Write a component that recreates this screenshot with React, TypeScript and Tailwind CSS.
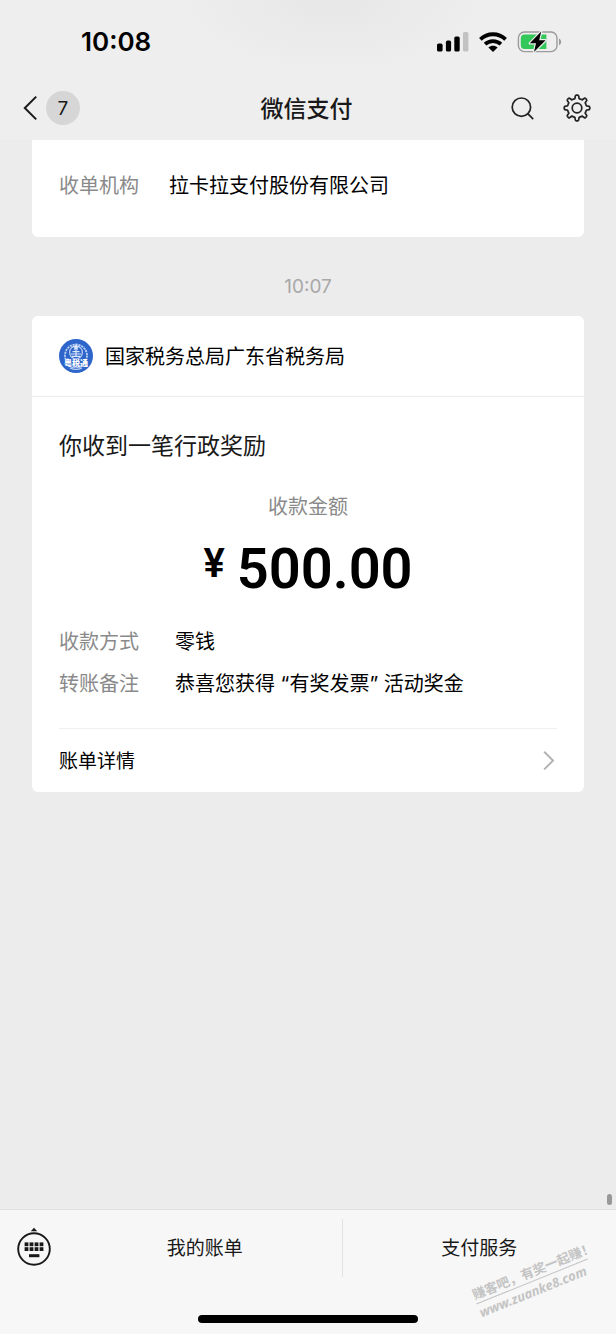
import type { ReactNode } from 'react';

interface Detail {
    label: string;
    value: string;
}

const DETAILS: Detail[] = [
    { label: '收款方式', value: '零钱' },
    { label: '转账备注', value: '恭喜您获得 “有奖发票” 活动奖金' },
];

const MENU = ['我的账单', '支付服务'];

// Outline of the settings gear: eight rounded teeth around (14, 14)
function gearPath() {
    const point = (radius: number, degrees: number) => {
        const rad = (degrees * Math.PI) / 180;
        return `${(14 + radius * Math.cos(rad)).toFixed(2)} ${(14 + radius * Math.sin(rad)).toFixed(2)}`;
    };
    let d = `M${point(9.8, -12)}`;
    for (let i = 0; i < 8; i++) {
        const a = i * 45;
        d += `L${point(11.4, a - 9)}Q${point(12.8, a - 8)} ${point(12.8, a - 3)}`;
        d += `L${point(12.8, a + 3)}Q${point(12.8, a + 8)} ${point(11.4, a + 9)}`;
        d += `L${point(9.8, a + 12)}Q${point(9.2, a + 17)} ${point(9.7, a + 22.5)}`;
        d += `Q${point(9.2, a + 28)} ${point(9.8, a + 33)}`;
    }
    return d + 'Z';
}

function StatusBar() {
    return (
        <div className="flex h-[76px] items-center justify-between pt-2 pr-[54px] pl-[81px]">
            <span className="text-[26px] leading-8 font-semibold text-black">10:08</span>
            <div className="flex items-center gap-[10px]">
                <svg width="32" height="22" viewBox="0 0 32 22" aria-hidden="true">
                    <rect x="0" y="12.6" width="5.6" height="8" rx="1.6" />
                    <rect x="8.9" y="9.6" width="5.2" height="11" rx="1.6" />
                    <rect x="17.3" y="5.6" width="5.4" height="15" rx="1.6" />
                    <rect x="26" y="1" width="5.4" height="19.6" rx="1.6" fill="#c2c2c2" />
                </svg>
                <svg width="28" height="22" viewBox="0 0 28 22" fill="none" stroke="#000" strokeWidth="3.8" aria-hidden="true">
                    <path d="M1.4 8.4C8.4 1.5 19.6 1.5 26.6 8.4" />
                    <path d="M6.1 13.2C10.5 9 17.5 9 21.9 13.2" />
                    <path d="M14 21L9.4 16.5C12 14.2 16 14.2 18.6 16.5Z" fill="#000" stroke="none" />
                </svg>
                <svg width="45" height="22" viewBox="0 0 45 22" aria-hidden="true">
                    <rect x="1.4" y="1" width="38.6" height="19.6" rx="6" fill="none" stroke="#9b9b9b" strokeWidth="1.4" />
                    <path d="M42 7.4C44.8 8.6 44.8 13 42 14.2Z" fill="#9b9b9b" />
                    <path d="M7.6 3.6H29.4V18H7.6Q3.8 18 3.8 14V7.6Q3.8 3.6 7.6 3.6Z" fill="#34c759" />
                    <path
                        d="M24.2 0.6L12.8 12.3H19L17 20.9L28.6 9.3H22.2Z"
                        stroke="#eee"
                        strokeWidth="2.4"
                        strokeLinejoin="round"
                        paintOrder="stroke"
                    />
                </svg>
            </div>
        </div>
    );
}

function NavBar() {
    return (
        <div className="grid h-16 grid-cols-3 items-center pr-[25px] pl-[22px]">
            <button type="button" aria-label="返回" className="flex items-center gap-2">
                <svg width="16" height="26" viewBox="0 0 16 26" fill="none" stroke="#191919" strokeWidth="2" aria-hidden="true">
                    <path d="M14.2 1.6L2.8 13L14.2 24.4" />
                </svg>
                <span className="flex size-[34px] items-center justify-center rounded-full bg-[#d6d6d6] pt-[2px] text-[19px] text-[#191919]">
                    7
                </span>
            </button>
            <h1 className="pt-[2px] text-center text-[23px] leading-8 font-medium text-[#191919]">微信支付</h1>
            <div className="flex items-center justify-end gap-7">
                <button type="button" aria-label="搜索">
                    <svg width="26" height="28" viewBox="0 0 26 28" fill="none" stroke="#222" strokeWidth="1.7" aria-hidden="true">
                        <circle cx="12.4" cy="13.2" r="9.2" />
                        <path d="M18.8 19.6L24.2 25.2" />
                    </svg>
                </button>
                <button type="button" aria-label="设置">
                    <svg width="28" height="28" viewBox="0 0 28 28" fill="none" stroke="#222" strokeWidth="1.7" strokeLinejoin="round" aria-hidden="true">
                        <path d={gearPath()} />
                        <circle cx="14" cy="14" r="4.8" />
                    </svg>
                </button>
            </div>
        </div>
    );
}

function TaxLogo() {
    return (
        <svg width="34" height="34" viewBox="0 0 34 34" aria-hidden="true">
            <circle cx="17" cy="17" r="17" fill="#2d65cb" />
            <g fill="none" stroke="#b9cef2">
                <circle cx="17" cy="16.5" r="11" strokeWidth="1.8" strokeDasharray="2.2 0.8" />
                <circle cx="17" cy="13.4" r="6.4" strokeWidth="1.3" />
                <path d="M8 26Q17 31.5 26 26M11 29Q17 32 23 29" strokeWidth="1.2" />
            </g>
            <path d="M17 4.6L18 7.2H20.6L18.5 8.7L19.3 11.2L17 9.7L14.7 11.2L15.5 8.7L13.4 7.2H16Z" fill="#dce7fa" />
            <path d="M12 15H22M13.5 12.6H20.5M17 10V18M13 17.4H21" stroke="#dce7fa" strokeWidth="1.2" />
            <text x="17" y="27" textAnchor="middle" fontSize="8" fontWeight="900" fill="#fff" stroke="#2d65cb" strokeWidth="0.6" paintOrder="stroke">
                粤税通
            </text>
        </svg>
    );
}

function DetailRow({ label, children, labelClass }: { label: string; children: ReactNode; labelClass: string }) {
    return (
        <div className="flex text-[20px] leading-7">
            <dt className={`shrink-0 text-[#8a8a8a] ${labelClass}`}>{label}</dt>
            <dd className="text-black">{children}</dd>
        </div>
    );
}

function PaymentCard() {
    return (
        <article className="rounded-md bg-white">
            <header className="flex h-[81px] items-center gap-3 border-b border-[#ededed] px-[27px]">
                <TaxLogo />
                <h2 className="pt-[2px] text-[20px] leading-7 text-black">国家税务总局广东省税务局</h2>
            </header>
            <div className="px-[27px] pt-[33px]">
                <h3 className="text-[23px] leading-8 text-[#191919]">你收到一笔行政奖励</h3>
                <p className="mt-[31px] text-center text-[20px] leading-7 text-[#8a8a8a]">收款金额</p>
                <p className="mt-4 flex items-start justify-center gap-3 font-[Roboto,sans-serif] font-semibold text-black">
                    <span className="text-[40px] leading-[54px]">¥</span>
                    <span className="text-[56px] leading-[64px]">500.00</span>
                </p>
                <dl className="mt-[27px] flex flex-col gap-[14px]">
                    {DETAILS.map((item) => (
                        <DetailRow key={item.label} label={item.label} labelClass="w-[116px]">
                            {item.value}
                        </DetailRow>
                    ))}
                </dl>
                <a href="#bill" className="mt-[30px] flex h-16 items-center justify-between border-t border-[#f0f0f0] text-[19px] leading-7 text-black">
                    <span className="pt-[2px]">账单详情</span>
                    <svg width="14" height="20" viewBox="0 0 14 20" fill="none" stroke="#b2b2b2" strokeWidth="2" aria-hidden="true">
                        <path d="M1.2 0.8L10 9.6L1.2 18.4" />
                    </svg>
                </a>
            </div>
        </article>
    );
}

function KeyboardIcon() {
    return (
        <svg width="34" height="40" viewBox="0 0 34 40" fill="#191919" aria-hidden="true">
            <path d="M17 0.8L20.2 4.2H13.8Z" />
            <circle cx="17" cy="22" r="15.8" fill="none" stroke="#191919" strokeWidth="1.9" />
            {[7.6, 12.6, 17.6, 22.6].map((x) => (
                <g key={x}>
                    <rect x={x} y="15.4" width="3.8" height="3.8" />
                    <rect x={x} y="20.2" width="3.8" height="3.8" />
                </g>
            ))}
            <rect x="12" y="27.2" width="10.4" height="3" />
        </svg>
    );
}

function Watermark() {
    return (
        <div className="pointer-events-none absolute right-[24px] bottom-[34px] w-[120px] -rotate-[22deg] whitespace-nowrap text-[#c4c4c4]">
            <p className="border-b border-[#c4c4c4] text-[13px] leading-[18px] font-bold">赚客吧，有奖一起赚！</p>
            <p className="font-['Noto_Sans',sans-serif] text-[13px] leading-[18px] font-bold italic">www.zuanke8.com</p>
        </div>
    );
}

export default function App() {
    return (
        <div className="relative flex min-h-screen flex-col bg-[#ececec] font-[Inter,'Noto_Sans_CJK_SC',sans-serif]">
            <header className="bg-[#eee] bg-[radial-gradient(ellipse_160px_75px_at_54%_0,#e7e7e7,#eee)]">
                <StatusBar />
                <NavBar />
            </header>

            <main className="relative flex-1 px-8">
                <dl className="rounded-b-md bg-white px-[27px] pt-8 pb-[37px]">
                    <DetailRow label="收单机构" labelClass="w-[110px]">
                        拉卡拉支付股份有限公司
                    </DetailRow>
                </dl>
                <time className="mt-9 mb-[15px] block text-center text-[19px] leading-7 text-[#a8a8a8]">10:07</time>
                <PaymentCard />
                <div className="absolute right-1 bottom-1 h-[11px] w-[5px] rounded-full bg-[#999]"></div>
            </main>

            <footer className="border-t border-[#e0e0e0] bg-[#f7f7f7]">
                <nav className="flex h-[76px] items-center">
                    <button type="button" aria-label="键盘" className="flex w-[68px] shrink-0 justify-center pb-[2px]">
                        <KeyboardIcon />
                    </button>
                    <div className="flex h-[58px] flex-1 divide-x divide-[#e2e2e2]">
                        {MENU.map((name) => (
                            <button key={name} type="button" className="flex-1 pt-[2px] text-[19px] leading-7 text-[#191919]">
                                {name}
                            </button>
                        ))}
                    </div>
                </nav>
                <div className="flex h-12 items-end justify-center pb-[11px]">
                    <div className="h-2 w-[220px] rounded-full bg-black"></div>
                </div>
            </footer>
            <Watermark />
        </div>
    );
}
